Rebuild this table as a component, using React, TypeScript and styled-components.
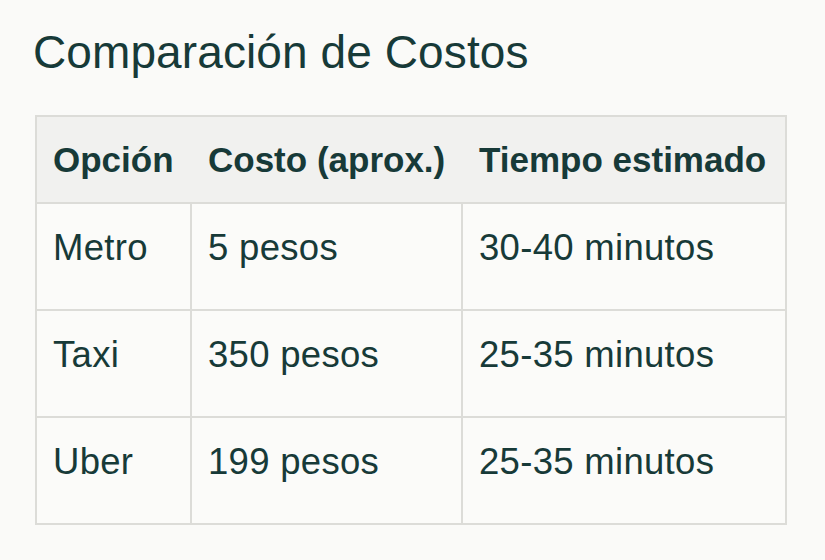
import * as React from "react"
import styled, { createGlobalStyle } from "styled-components"

const ink = "#173a38"
const line = "#dcdcd8"

const GlobalStyle = createGlobalStyle`
  html, body {
    margin: 0;
    padding: 0;
    background: #fafaf8;
  }
  body {
    font-family: "Liberation Sans", Arial, sans-serif;
    color: ${ink};
  }
`

const Page = styled.main`
  width: 825px;
  height: 560px;
  padding: 29px 0 0 33px;
  box-sizing: border-box;
`

const Title = styled.h1`
  margin: 0 0 40px;
  font-size: 46px;
  line-height: 46px;
  font-weight: 400;
  letter-spacing: 0.1px;
`

const Table = styled.div`
  margin-left: 2px;
  width: 752px;
  border: 2px solid ${line};
  background: #fbfbf9;
  box-sizing: border-box;
`

// header and body share the same column grid; the header just has no visible dividers
const Row = styled.div<{ $head?: boolean; $last?: boolean }>`
  display: grid;
  grid-template-columns: 153px 271px 1fr;
  height: ${(p) => (p.$head ? 87 : p.$last ? 105 : 107)}px;
  box-sizing: border-box;
  background: ${(p) => (p.$head ? "#f1f1ef" : "transparent")};
  border-bottom: ${(p) => (p.$last ? "none" : `2px solid ${line}`)};
`

const Cell = styled.div<{ $head?: boolean; $divider?: boolean }>`
  padding: 17px 0 0 16px;
  font-size: ${(p) => (p.$head ? 35 : 36.5)}px;
  line-height: ${(p) => (p.$head ? 51 : 54)}px;
  font-weight: ${(p) => (p.$head ? 700 : 400)};
  letter-spacing: ${(p) => (p.$head ? 0 : 0.3)}px;
  white-space: nowrap;
  border-left: 2px solid ${(p) => (p.$divider && !p.$head ? line : "transparent")};
  &:first-child {
    border-left: none;
  }
`

const headers = ["Opción", "Costo (aprox.)", "Tiempo estimado"]

const rows = [
  ["Metro", "5 pesos", "30-40 minutos"],
  ["Taxi", "350 pesos", "25-35 minutos"],
  ["Uber", "199 pesos", "25-35 minutos"],
]

export default function App() {
  return (
    <>
      <GlobalStyle />
      <Page>
        <Title>Comparación de Costos</Title>
        <Table>
          <Row $head>
            {headers.map((h, j) => (
              <Cell key={h} $head $divider={j > 0}>
                {h}
              </Cell>
            ))}
          </Row>
          {rows.map((row, i) => (
            <Row key={row[0]} $last={i === rows.length - 1}>
              {row.map((value, j) => (
                <Cell key={j} $divider={j > 0}>
                  {value}
                </Cell>
              ))}
            </Row>
          ))}
        </Table>
      </Page>
    </>
  )
}
